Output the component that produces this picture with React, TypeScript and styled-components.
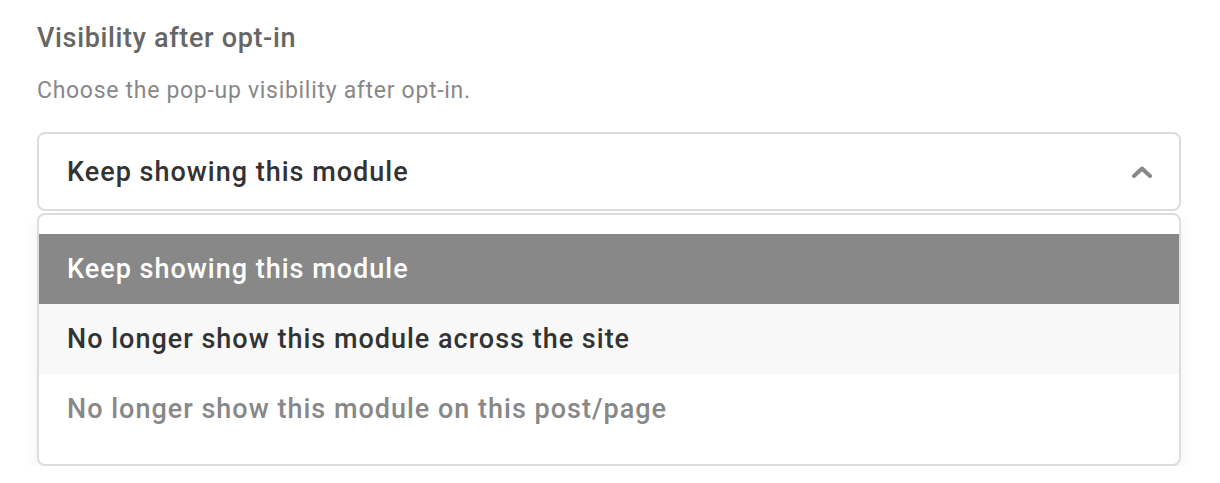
import React from "react"
import styled, { createGlobalStyle } from "styled-components"

const GlobalStyle = createGlobalStyle`
  html, body {
    margin: 0;
    padding: 0;
    background: #fff;
  }
  body {
    font-family: Roboto, "Liberation Sans", sans-serif;
    -webkit-font-smoothing: antialiased;
  }
`

const Field = styled.div`
  padding: 22px 39px 0 37px;
`

const Label = styled.div`
  font-size: 27px;
  line-height: 32px;
  font-weight: 500;
  letter-spacing: 0.65px;
  color: #666;
  margin-bottom: 22px;
`

const Description = styled.div`
  font-size: 23px;
  line-height: 30px;
  letter-spacing: 0.7px;
  color: #888;
  margin-bottom: 26px;
`

const SelectBox = styled.div`
  display: flex;
  align-items: center;
  justify-content: space-between;
  height: 75px;
  padding: 0 27px 0 28px;
  border: 2px solid #ddd;
  border-radius: 8px;
  font-size: 27px;
  font-weight: 500;
  letter-spacing: 1px;
  color: #333;
`

const Chevron = () => (
  <svg width="20" height="12" viewBox="0 0 20 12" fill="none">
    <path
      d="M2 10L10 2.5L18 10"
      stroke="#888"
      strokeWidth="4"
      strokeLinecap="round"
      strokeLinejoin="round"
    />
  </svg>
)

const Menu = styled.ul`
  list-style: none;
  margin: 2px 0 0;
  padding: 19px 0 20px;
  border: 2px solid #ddd;
  border-radius: 8px;
  background: #fff;
  box-shadow: 0 6px 16px rgba(0, 0, 0, 0.06);
`

const Option = styled.li<{ variant: "selected" | "hover" | "muted" }>`
  height: 70px;
  display: flex;
  align-items: center;
  padding: 0 28px;
  font-size: 27px;
  font-weight: 500;
  letter-spacing: 1px;
  background: ${p =>
    p.variant === "selected" ? "#888" : p.variant === "hover" ? "#f8f8f8" : "#fff"};
  color: ${p =>
    p.variant === "selected" ? "#fff" : p.variant === "hover" ? "#333" : "#888"};
`

export default function App() {
  return (
    <>
      <GlobalStyle />
      <Field>
        <Label>Visibility after opt-in</Label>
        <Description>Choose the pop-up visibility after opt-in.</Description>
        <SelectBox>
          <span>Keep showing this module</span>
          <Chevron />
        </SelectBox>
        <Menu>
          <Option variant="selected">Keep showing this module</Option>
          <Option variant="hover">No longer show this module across the site</Option>
          <Option variant="muted">No longer show this module on this post/page</Option>
        </Menu>
      </Field>
    </>
  )
}
